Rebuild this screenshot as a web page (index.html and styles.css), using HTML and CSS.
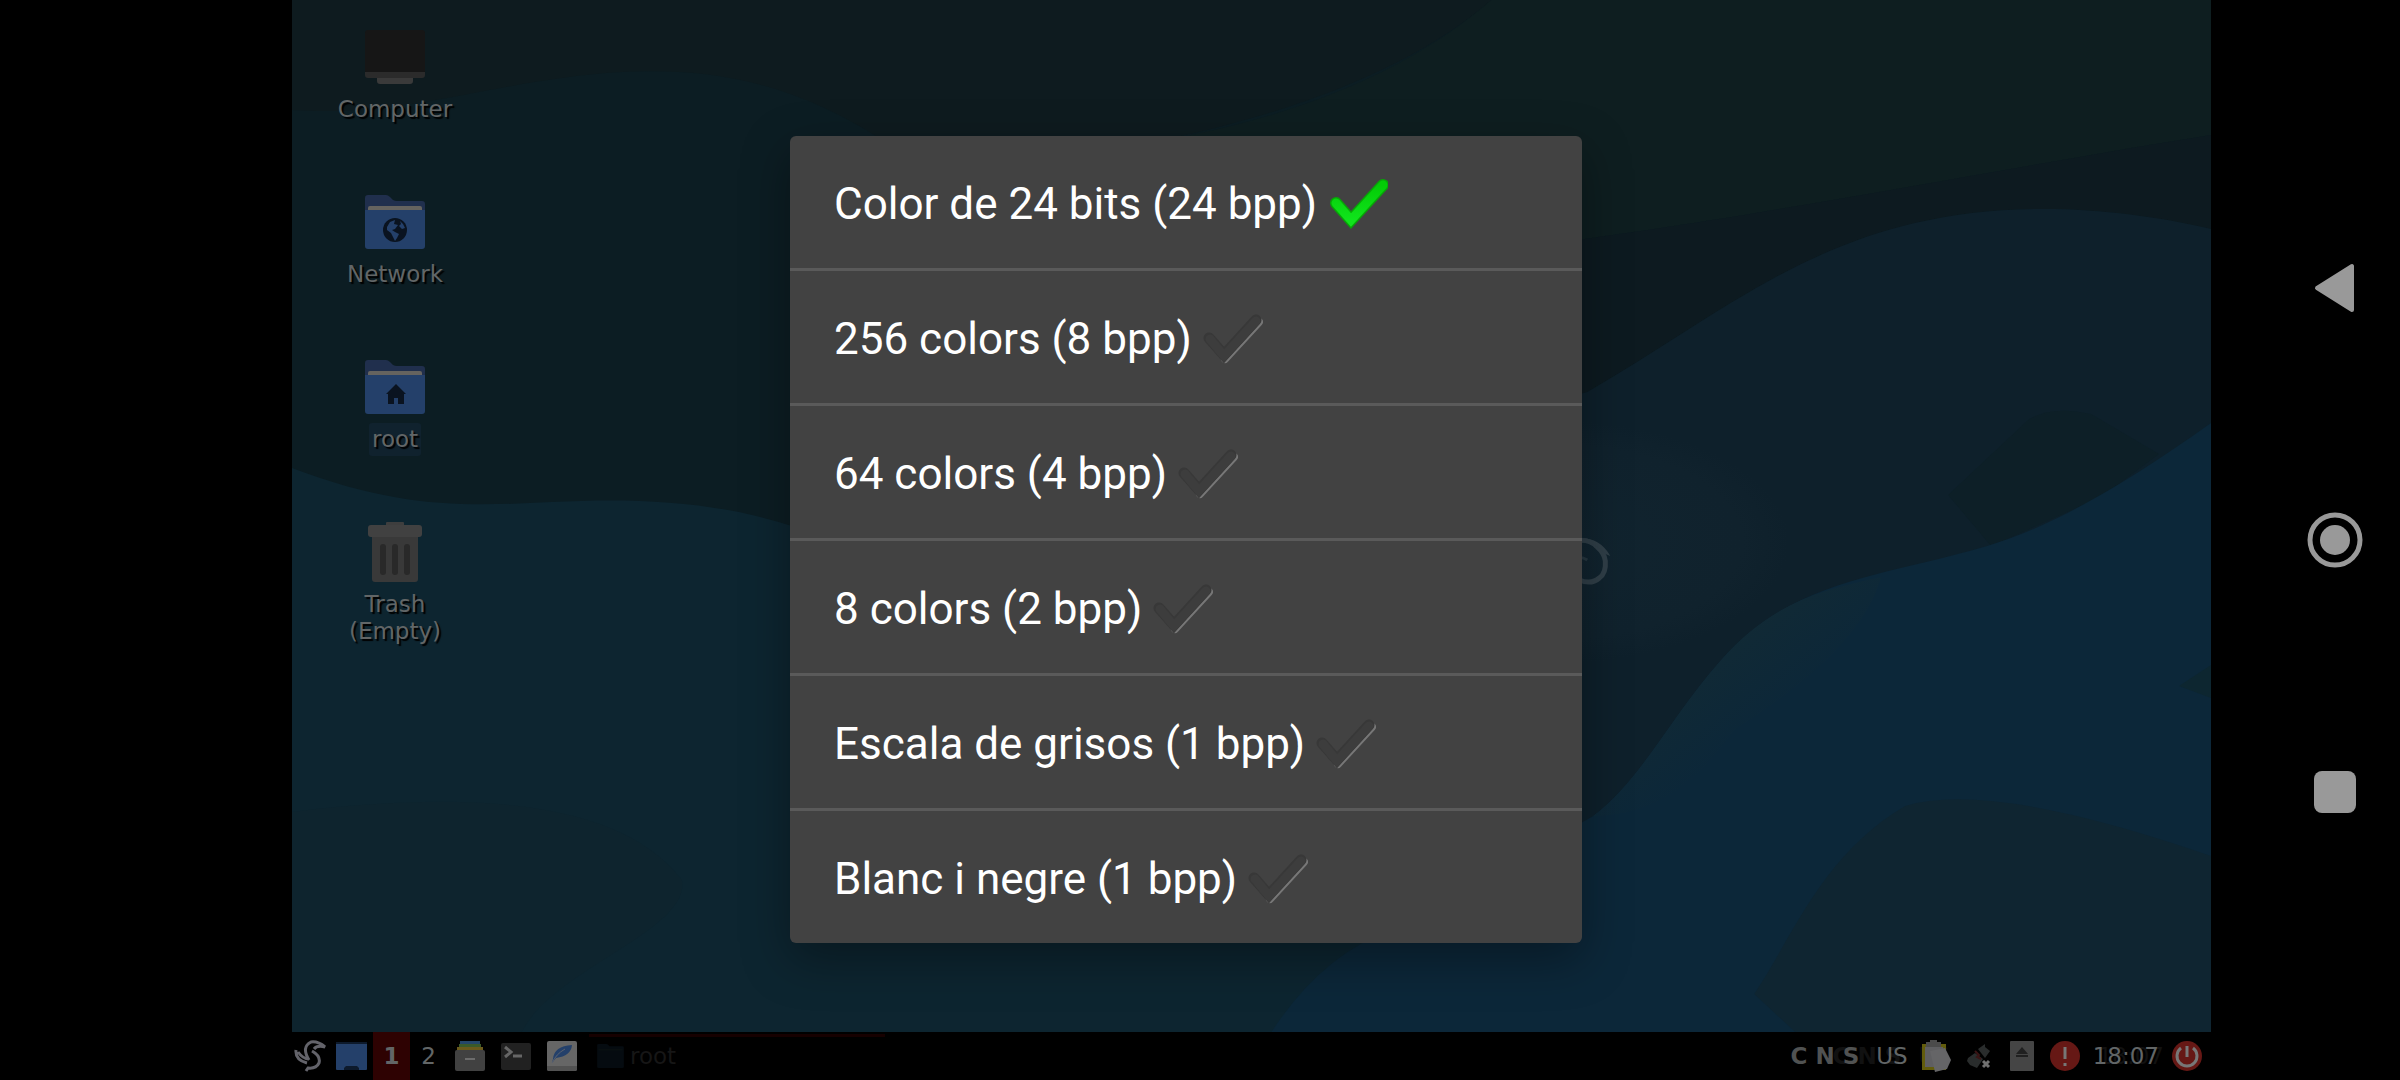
FILE: index.html
```
<!DOCTYPE html>
<html lang="ca">
<head>
    <meta charset="UTF-8">
    <meta name="viewport" content="width=device-width, initial-scale=1.0">
    <title>Format de color</title>
    <link rel="stylesheet" href="styles.css">
</head>
<body>
    <svg class="defs" width="0" height="0">
        <linearGradient id="green" x1="0" y1="0" x2="0" y2="1">
            <stop offset="0" stop-color="#03cc06"/>
            <stop offset="1" stop-color="#10e41c"/>
        </linearGradient>
        <linearGradient id="crest" gradientUnits="userSpaceOnUse" x1="1400" y1="640" x2="1470" y2="730">
            <stop offset="0" stop-color="#122a34"/>
            <stop offset="1" stop-color="#0c2739"/>
        </linearGradient>
        <radialGradient id="glow">
            <stop offset="0" stop-color="#11242f"/>
            <stop offset="0.8" stop-color="#10222d"/>
            <stop offset="1" stop-color="#0e202b"/>
        </radialGradient>
        <symbol id="check-on" viewBox="0 0 66 66">
            <path d="M14 32 L29 49 L61 14" fill="none" stroke="#06a806" stroke-width="12" stroke-linecap="round"/>
            <path d="M14 32 L29 49 L61 14" fill="none" stroke="url(#green)" stroke-width="9" stroke-linecap="round"/>
        </symbol>
        <symbol id="check-off" viewBox="0 0 66 66">
            <path d="M28 53 L62 16" fill="none" stroke="#777" stroke-width="8" stroke-linecap="round"/>
            <path d="M12 32 L27 49 L59 14" fill="none" stroke="#383838" stroke-width="11" stroke-linecap="round"/>
            <path d="M13 33 L27 50 L59 15" fill="none" stroke="#3d3d3d" stroke-width="9" stroke-linecap="round"/>
        </symbol>
        <symbol id="folder" viewBox="0 0 60 54">
            <path d="M0 20V3q0-3 3-3h18q2 0 4 2l3 3q2 1 4 1h25q3 0 3 3v11z" fill="#202f4d"/>
            <path d="M3 17v-4q0-2 2-2h50q2 0 2 2v4z" fill="#65635f"/>
            <path d="M0 15h60v36q0 3-3 3H3q-3 0-3-3z" fill="#24406a"/>
        </symbol>
    </svg>

    <div class="screen">
        <main class="desktop">
            <div class="workspace">
                <svg class="wallpaper" viewBox="0 0 1920 1032" preserveAspectRatio="none">
                    <rect width="1920" height="1032" fill="#0c1d23"/>
                    <path d="M0 0H1200C1120 70 990 120 820 150L600 146C500 80 420 68 330 72C200 80 120 118 0 110z" fill="#0e1b1f"/>
                    <path d="M1200 0H1920V135C1700 170 1400 230 1200 250L800 150C990 130 1120 70 1200 0z" fill="#0e1e20"/>
                    <path d="M1920 135C1700 170 1400 230 1200 250V420L1296 392C1440 310 1540 209 1753 209C1810 209 1870 217 1920 229z" fill="#0d1a20"/>
                    <path d="M1200 420L1296 392C1440 310 1540 209 1753 209C1810 209 1870 217 1920 229V640L1250 860z" fill="#0e202b"/>
                    <ellipse cx="1260" cy="542" rx="238" ry="122" fill="url(#glow)"/>
                    <path d="M1657 495L1737 420Q1760 405 1800 414L1868 454L1810 497L1700 546z" fill="#0d1f27"/>
                    <!-- left dune -->
                    <path d="M0 468C110 510 180 506 260 502C340 498 420 500 500 526L1200 760V1032H0z" fill="#0d2530"/>
                    <path d="M0 812C180 790 330 800 390 880C400 930 260 970 230 1032H0z" fill="#0e242e"/>
                    <!-- right dune -->
                    <path d="M1920 423C1830 487 1760 527 1696 546C1590 577 1500 580 1430 660C1380 716 1350 780 1302 816L1100 930Q1030 955 980 1032H1920z" fill="#0c2739"/>
                    <path d="M1302 816C1350 780 1380 716 1430 660C1480 603 1530 590 1590 577Q1570 650 1443 730C1400 790 1360 815 1302 816z" fill="url(#crest)"/>
                    <path d="M1463 994C1500 940 1530 855 1614 806Q1700 780 1920 856V1032H1504z" fill="#0f2531"/>
                    <path d="M1888 686L1920 665V698z" fill="#0d2630"/>
                    <!-- swirl -->
                    <path d="M1282 541q16-3 24 6 7 6 8 14 1 12-6 17-8 7-20 2" fill="none" stroke="#303f48" stroke-width="5"/>
                    <path d="M1289 538q20 0 30 18l-5-2q-8-10-22-12z" fill="#303f48"/>
                    <path d="M1282 560q6-5 14 0" fill="none" stroke="#263740" stroke-width="3"/>
                </svg>
                <ul class="icons">
                    <li>
                        <svg class="desk-icon" viewBox="0 0 72 72">
                            <rect x="6" y="9" width="60" height="44" rx="3" fill="#161616"/>
                            <path d="M6 51h60v3q0 3-3 3H9q-3 0-3-3z" fill="#2b2b2b"/>
                            <path d="M18 57h36v3q0 3-3 3H21q-3 0-3-3z" fill="#3a3a3a"/>
                        </svg>
                        <span class="label">Computer</span>
                    </li>
                    <li>
                        <svg class="desk-icon" viewBox="0 0 72 72">
                            <use href="#folder" x="6" y="9" width="60" height="54"/>
                            <circle cx="36" cy="44" r="12" fill="#0a1320"/>
                            <path d="M28 41l3-5 5-2-1 4 4 1-3 4-3 1 3 2 4 2-2 4-2 3-2-4-2-4-4-3zM41 35l3 3 2 4-3 1-3-3 2-2z" fill="#24406a"/>
                        </svg>
                        <span class="label">Network</span>
                    </li>
                    <li>
                        <svg class="desk-icon" viewBox="0 0 72 72">
                            <use href="#folder" x="6" y="9" width="60" height="54"/>
                            <path d="M37 33l10 10h-2v10h-6v-6h-4v6h-6V43h-2z" fill="#0a1320"/>
                        </svg>
                        <span class="label selected">root</span>
                    </li>
                    <li>
                        <svg class="desk-icon" viewBox="0 0 72 72">
                            <rect x="27" y="6" width="18" height="6" rx="1" fill="#3e3e3e"/>
                            <path d="M13 18h46v45q0 3-3 3H16q-3 0-3-3z" fill="#393939"/>
                            <rect x="9" y="9" width="54" height="12" rx="3" fill="#414141"/>
                            <path d="M24 31v25M36 31v25M48 31v25" stroke="#292929" stroke-width="6" stroke-linecap="round"/>
                        </svg>
                        <span class="label">Trash<br>(Empty)</span>
                    </li>
                </ul>
            </div>

            <footer class="taskbar">
                <button class="start" aria-label="Menu">
                    <svg width="34" height="34" viewBox="0 0 34 34">
                        <path d="M2 11Q1 21 13 24M4 13Q9 20 15 20M15 21Q7 8 17 3Q24 2 31 8Q23 6 20 10M18 12Q27 17 25 24Q22 30 14 29L12 32" fill="none" stroke="#63636a" stroke-width="3"/>
                    </svg>
                </button>
                <button class="show-desktop" aria-label="Show desktop">
                    <svg width="31" height="28" viewBox="0 0 31 28">
                        <rect width="31" height="28" rx="1" fill="#24406a"/>
                        <path d="M0 0h31v2H0zM8 28v-2l2-2h11l2 2v2z" fill="#0d1a2c"/>
                    </svg>
                </button>
                <button class="pager current">1</button>
                <button class="pager">2</button>
                <div class="launchers">
                    <button aria-label="Files">
                        <svg width="30" height="30" viewBox="0 0 30 30">
                            <path d="M5 0h20v4H5z" fill="#24466a"/>
                            <path d="M4 3h22v4H4z" fill="#3a5a2a"/>
                            <path d="M2 6h26v5H2z" fill="#6a5a1c"/>
                            <rect y="9" width="30" height="21" rx="2" fill="#414141"/>
                            <path d="M10 18h10" stroke="#6c6c6c" stroke-width="2"/>
                        </svg>
                    </button>
                    <button aria-label="Terminal">
                        <svg width="30" height="30" viewBox="0 0 30 30">
                            <rect y="2" width="30" height="27" rx="2" fill="#212121"/>
                            <path d="M4 6l6 5-6 5" fill="none" stroke="#666" stroke-width="3"/>
                            <path d="M12 15h9" stroke="#666" stroke-width="3"/>
                        </svg>
                    </button>
                    <button aria-label="Editor">
                        <svg width="30" height="30" viewBox="0 0 30 30">
                            <rect width="30" height="30" rx="2" fill="#666"/>
                            <path d="M0 25h30v3q0 2-2 2H2q-2 0-2-2z" fill="#525252"/>
                            <path d="M6 18Q7 5 25 4Q24 15 9 17L5 22z" fill="#24406a"/>
                            <path d="M5 22Q9 13 18 8" fill="none" stroke="#5b6270" stroke-width="1"/>
                        </svg>
                    </button>
                </div>
                <button class="task">
                    <svg width="27" height="24" viewBox="0 0 60 54">
                        <path d="M0 12V3q0-3 3-3h18q2 0 4 2l3 3h29q3 0 3 3v43q0 3-3 3H3q-3 0-3-3z" fill="#050b10"/>
                        <path d="M3 13h54" stroke="#0b1012" stroke-width="3"/>
                    </svg>
                    root
                </button>

                <div class="tray">
                    <span class="locks">C N S</span>
                    <span class="layout">US</span>
                    <svg width="30" height="32" viewBox="0 0 30 32">
                        <rect x="1" y="4" width="24" height="26" fill="#625c0c"/>
                        <path d="M4 7h18v20H4z" fill="#5f5f62"/>
                        <path d="M5 2h4V0h7v2h4v5H5z" fill="#4b4b4b"/>
                        <path d="M9 11l15-3 6 12-4 9-12 3z" fill="#656567"/>
                    </svg>
                    <svg width="30" height="32" viewBox="0 0 30 32">
                        <path d="M4 18l7-5 8 6-6 9-7-3-3-4zM14 9l7-5v3l5 4-5 7z" fill="#292c2c"/>
                        <path d="M11 11l4 4-2 2 4 2" fill="none" stroke="#3a1414" stroke-width="2"/>
                        <path d="M19 21l6 6M25 21l-6 6" stroke="#707070" stroke-width="3"/>
                    </svg>
                    <svg width="30" height="30" viewBox="0 0 30 30">
                        <rect x="3" width="24" height="30" rx="1" fill="#454545"/>
                        <path d="M15 6l6 7H9z" fill="#202020"/>
                        <path d="M9 15h12" stroke="#202020" stroke-width="2"/>
                    </svg>
                    <svg width="30" height="30" viewBox="0 0 30 30">
                        <circle cx="15" cy="15" r="15" fill="#661815"/>
                        <path d="M15 6v12M15 22v3" stroke="#777" stroke-width="3"/>
                    </svg>
                    <time class="clock">18:07</time>
                    <button aria-label="Shut down">
                        <svg width="30" height="30" viewBox="0 0 30 30">
                            <circle cx="15" cy="15" r="15" fill="#661815"/>
                            <path d="M9 7a10 10 0 1 0 12 0M15 5v11" fill="none" stroke="#777" stroke-width="3"/>
                        </svg>
                    </button>
                </div>
            </footer>
        </main>

        <nav class="navbar">
            <button aria-label="Back">
                <svg width="56" height="56" viewBox="0 0 56 56">
                    <path d="M45 6v44L10 28z" fill="#999" stroke="#999" stroke-width="4" stroke-linejoin="round"/>
                </svg>
            </button>
            <button aria-label="Home">
                <svg width="56" height="56" viewBox="0 0 56 56">
                    <circle cx="28" cy="28" r="25" fill="none" stroke="#999" stroke-width="5"/>
                    <circle cx="28" cy="28" r="15" fill="#999"/>
                </svg>
            </button>
            <button aria-label="Recents">
                <svg width="56" height="56" viewBox="0 0 56 56">
                    <rect x="7" y="7" width="42" height="42" rx="8" fill="#999"/>
                </svg>
            </button>
        </nav>

        <div class="overlay">
            <form class="dialog" role="dialog">
                <label class="option">
                    <input type="radio" name="color" checked>Color de 24 bits (24 bpp)
                    <svg class="check"><use href="#check-on"/></svg>
                </label>
                <label class="option">
                    <input type="radio" name="color">256 colors (8 bpp)
                    <svg class="check"><use href="#check-off"/></svg>
                </label>
                <label class="option">
                    <input type="radio" name="color">64 colors (4 bpp)
                    <svg class="check"><use href="#check-off"/></svg>
                </label>
                <label class="option">
                    <input type="radio" name="color">8 colors (2 bpp)
                    <svg class="check"><use href="#check-off"/></svg>
                </label>
                <label class="option">
                    <input type="radio" name="color">Escala de grisos (1 bpp)
                    <svg class="check"><use href="#check-off"/></svg>
                </label>
                <label class="option">
                    <input type="radio" name="color">Blanc i negre (1 bpp)
                    <svg class="check"><use href="#check-off"/></svg>
                </label>
            </form>
        </div>
    </div>
</body>
</html>
```
FILE: styles.css
```
* {
    box-sizing: border-box;
}
body {
    margin: 0;
    background-color: #000;
    font-family: "DejaVu Sans", sans-serif;
    font-size: 23px;
    color: #626667;
}
button {
    display: flex;
    align-items: center;
    justify-content: center;
    padding: 0;
    border: none;
    background: none;
    font: inherit;
    color: inherit;
    cursor: pointer;
}
svg {
    display: block;
    flex: none;
}
.defs {
    position: absolute;
}
.screen {
    position: relative;
    display: flex;
    min-height: 100vh;
    padding-left: 292px;
}

/* remote desktop */
.desktop {
    flex: 1;
    display: flex;
    flex-direction: column;
    margin-right: 59px;
}
.workspace {
    position: relative;
    flex: 1;
}
.wallpaper {
    position: absolute;
    width: 100%;
    height: 100%;
}
.icons {
    position: relative;
    display: grid;
    grid-auto-rows: 165px;
    width: 206px;
    margin: 0;
    padding: 21px 0 0;
    list-style: none;
}
.icons li {
    display: flex;
    flex-direction: column;
    align-items: center;
}
.desk-icon {
    width: 72px;
    height: 72px;
}
.label {
    padding: 3px;
    border-radius: 3px;
    line-height: 27px;
    text-align: center;
    text-shadow: 2px 2px 1px #000;
}
.label.selected {
    background-color: #10222e;
}

/* panel */
.taskbar {
    display: flex;
    align-items: center;
    height: 48px;
    background-color: #000;
}
.start {
    width: 38px;
}
.show-desktop {
    width: 43px;
}
.pager {
    width: 37px;
    height: 48px;
}
.pager.current {
    background-color: #2e0202;
    font-weight: bold;
}
.launchers {
    display: flex;
    gap: 16px;
    padding: 0 12px 0 8px;
}
.task {
    justify-content: flex-start;
    gap: 6px;
    width: 296px;
    height: 44px;
    padding: 0 0 3px 8px;
    border-top: 3px solid #160000;
    color: #161616;
}
.tray {
    display: flex;
    align-items: center;
    gap: 13px;
    margin-left: auto;
    padding-right: 9px;
}
.locks {
    margin-right: 4px;
    font-weight: bold;
    color: #505252;
    text-shadow: 42px 0 #111;
}
.layout {
    text-shadow: 42px 0 #0c0c0c;
}
.clock {
    text-shadow: 5px 0 #111;
}

/* system navigation */
.navbar {
    display: flex;
    flex-direction: column;
    align-items: center;
    justify-content: center;
    gap: 196px;
    width: 130px;
}

/* colour picker */
.overlay {
    position: absolute;
    inset: 0 130px 0 102px;
    display: flex;
    align-items: center;
    justify-content: center;
    padding-bottom: 1px;
}
.dialog {
    width: 792px;
    border-radius: 6px;
    background-color: #424242;
    box-shadow: 0 16px 48px rgba(0, 0, 0, 0.35);
    font-family: Roboto, sans-serif;
    font-size: 44px;
    color: #fff;
}
.option {
    display: flex;
    align-items: center;
    gap: 5px;
    height: 132px;
    padding: 3px 44px 0;
}
.option + .option {
    height: 135px;
    border-top: 3px solid #5a5a5a;
}
.option input {
    position: absolute;
    opacity: 0;
    pointer-events: none;
}
.check {
    width: 66px;
    height: 66px;
}
```
